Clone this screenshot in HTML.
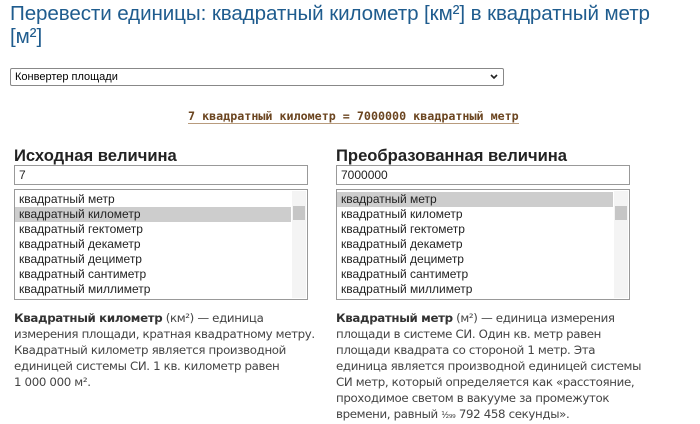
<!DOCTYPE html>
<html><head><meta charset="utf-8"><style>
body{margin:0;width:700px;height:420px;background:#fff;font-family:"Liberation Sans","DejaVu Sans",sans-serif;position:relative;overflow:hidden}
.a{position:absolute}
h1{position:absolute;left:10px;top:2px;margin:0;font-weight:normal;font-size:20.6px;line-height:23px;color:#1f5c8e;width:690px;font-family:"Liberation Sans",sans-serif;letter-spacing:-0.1px;white-space:nowrap}
.sel{left:10px;top:68px;width:494px;height:18px;border:1px solid #888;border-radius:2px;font-size:11px;line-height:16px;box-sizing:border-box;padding-left:4px;font-family:"Liberation Sans",sans-serif}
.res{left:188px;top:109px;font-family:"DejaVu Sans Mono",monospace;font-size:11.7px;color:#6b4520;border-bottom:1px solid #b89b7d;line-height:14px;font-weight:bold}
.hd{font-weight:bold;font-size:16.6px;color:#222;font-family:"Liberation Sans",sans-serif}
.inp{width:294px;height:20px;border:1px solid #999;box-sizing:border-box;font-size:12px;line-height:18px;padding-left:4px;color:#222}
.lb{width:294px;height:111px;border:1px solid #999;box-sizing:border-box;overflow:hidden;padding-top:2px}
.lb p{margin:0;height:15px;line-height:15px;font-size:12px;padding-left:4px;color:#222;width:272px}
.lb .s{background:#cdcdcd}
.sb{position:absolute;right:1px;top:1px;width:14px;bottom:1px;background:#f4f4f4}
.th{position:absolute;left:1px;width:12px;height:14px;background:#c6c6c6}
.desc{font-size:11.8px;line-height:16px;color:#444;font-family:"DejaVu Sans",sans-serif;letter-spacing:-0.35px}
.desc b{color:#333}
</style></head><body>
<h1>Перевести единицы: квадратный километр [км²] в квадратный метр<br>[м²]</h1>
<div class="a sel">Конвертер площади</div>
<svg class="a" style="left:490px;top:74px" width="8" height="6"><path d="M1 1L4 4L7 1" stroke="#222" stroke-width="1.6" fill="none"/></svg>
<div class="a res">7 квадратный километр = 7000000 квадратный метр</div>

<div class="a hd" style="left:14px;top:146px">Исходная величина</div>
<div class="a inp" style="left:14px;top:165px">7</div>
<div class="a lb" style="left:14px;top:189px"><p>квадратный метр</p><p class="s">квадратный километр</p><p>квадратный гектометр</p><p>квадратный декаметр</p><p>квадратный дециметр</p><p>квадратный сантиметр</p><p>квадратный миллиметр</p><div class="sb"><div class="th" style="top:15px"></div></div></div>

<div class="a hd" style="left:336px;top:146px">Преобразованная величина</div>
<div class="a inp" style="left:336px;top:165px">7000000</div>
<div class="a lb" style="left:336px;top:189px"><p class="s">квадратный метр</p><p>квадратный километр</p><p>квадратный гектометр</p><p>квадратный декаметр</p><p>квадратный дециметр</p><p>квадратный сантиметр</p><p>квадратный миллиметр</p><div class="sb"><div class="th" style="top:15px"></div></div></div>

<div class="a desc" style="left:14px;top:310px;width:320px"><b>Квадратный километр</b> (км²) — единица<br>измерения площади, кратная квадратному метру.<br>Квадратный километр является производной<br>единицей системы СИ. 1 кв. километр равен<br>1 000 000 м².</div>
<div class="a desc" style="left:336px;top:310px;width:330px"><b>Квадратный метр</b> (м²) — единица измерения<br>площади в системе СИ. Один кв. метр равен<br>площади квадрата со стороной 1 метр. Эта<br>единица является производной единицей системы<br>СИ метр, который определяется как «расстояние,<br>проходимое светом в вакууме за промежуток<br>времени, равный <span style="font-size:9px">¹⁄₂₉₉</span> 792 458 секунды».</div>
</body></html>
